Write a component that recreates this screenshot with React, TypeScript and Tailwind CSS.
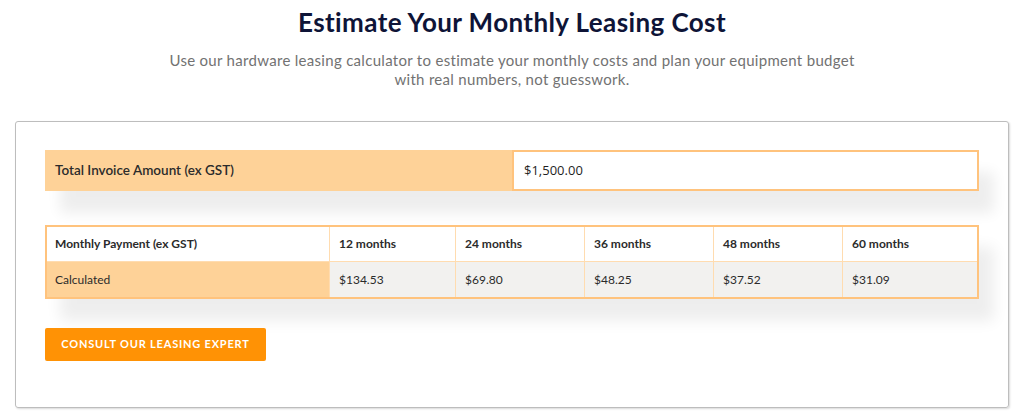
import React from 'react';

const terms = ['12 months', '24 months', '36 months', '48 months', '60 months'];
const payments = ['$134.53', '$69.80', '$48.25', '$37.52', '$31.09'];
const colWidths = ['w-[126px]', 'w-[129px]', 'w-[129px]', 'w-[129px]', 'flex-1'];

const App: React.FC = () => {
  return (
    <div className="w-[1024px] h-[417px] bg-white overflow-hidden font-['Lato',sans-serif]">
      <div className="flex flex-col items-center pt-[7px]">
        <h1 className="text-[26px] leading-[30px] font-bold text-[#0e1437] tracking-[0.4px]">
          Estimate Your Monthly Leasing Cost
        </h1>
        <p className="mt-[14px] w-[700px] text-center text-[15px] leading-[19px] text-[#727272] tracking-[0.3px]">
          Use our hardware leasing calculator to estimate your monthly costs and plan your equipment budget with real numbers, not guesswork.
        </p>
      </div>

      <div className="mx-[15px] mt-[32px] h-[287px] border border-[#bdbdbd] rounded-[3px] px-[29px] pt-[28px] shadow-[1px_1px_2px_rgba(0,0,0,0.15)]">
        <div className="flex h-[41px] shadow-[15px_22px_14px_rgba(0,0,0,0.07)]">
          <div className="w-[467px] bg-[#fed298] flex items-center pl-[10px] text-[13.5px] font-semibold text-[#2b2b2b]">
            Total Invoice Amount (ex GST)
          </div>
          <div className="flex-1 bg-white border-2 border-[#ffc37d] flex items-center pl-[10px] text-[13px] text-[#1f1f1f] font-['Open_Sans',sans-serif]">
            $1,500.00
          </div>
        </div>

        <div className="mt-[34px] border-2 border-[#ffc37d] shadow-[15px_22px_14px_rgba(0,0,0,0.07)] text-[12px] text-[#2b2b2b]">
          <div className="flex h-[35px] bg-white border-b border-[#ffdcb0]">
            <div className="w-[282px] flex items-center pl-[8px] font-bold">Monthly Payment (ex GST)</div>
            {terms.map((t, i) => (
              <div key={t} className={`${colWidths[i]} flex items-center pl-[9px] font-bold border-l border-[#ffdcb0]`}>
                {t}
              </div>
            ))}
          </div>
          <div className="flex h-[35px] bg-[#f2f1ef]">
            <div className="w-[282px] flex items-center pl-[8px] bg-[#fed298]">Calculated</div>
            {payments.map((p, i) => (
              <div key={p} className={`${colWidths[i]} flex items-center pl-[9px] border-l border-[#ffdcb0]`}>
                {p}
              </div>
            ))}
          </div>
        </div>

        <button className="mt-[29px] h-[33px] w-[221px] bg-[#ff9205] rounded-[2px] text-white text-[11px] font-bold tracking-[0.8px] uppercase">
          Consult our leasing expert
        </button>
      </div>
    </div>
  );
};

export default App;
